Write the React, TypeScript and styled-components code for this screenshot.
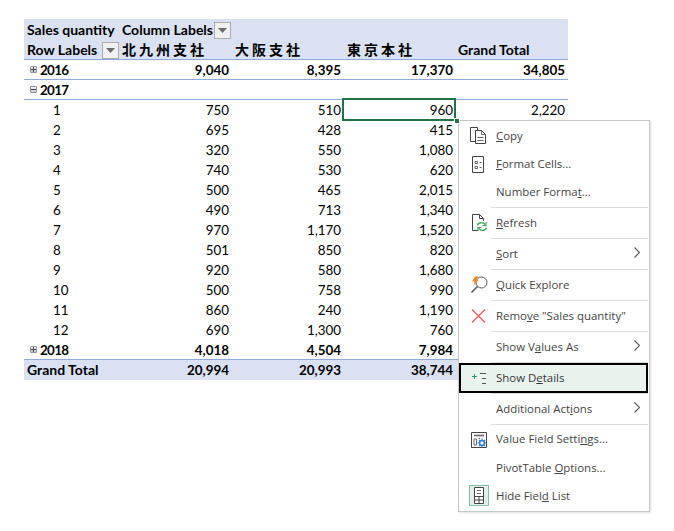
import React from "react";
import styled, { createGlobalStyle } from "styled-components";

const Global = createGlobalStyle`
  html, body { margin: 0; padding: 0; background: #fff; }
  body { width: 674px; height: 531px; overflow: hidden; }
`;

const Page = styled.div`
  position: relative;
  width: 674px;
  height: 531px;
  padding: 19px 0 0 24px;
  box-sizing: border-box;
`;

const Table = styled.div`
  display: flex;
  flex-direction: column;
  width: 544px;
  font-family: "Lato", "Liberation Sans", sans-serif;
  font-size: 13.4px;
  color: #000;
`;

const Row = styled.div<{ $band?: boolean; $bold?: boolean; $line?: boolean; $top?: boolean }>`
  display: grid;
  grid-template-columns: 94px 114px 112px 112px 112px;
  grid-template-rows: 20px;
  height: ${(p) => (p.$top ? 21 : 20)}px;
  padding-top: ${(p) => (p.$top ? 1 : 0)}px;
  box-sizing: border-box;
  background: ${(p) => (p.$band ? "#d9e1f2" : "#fff")};
  font-weight: ${(p) => (p.$bold ? 700 : 400)};
  border-bottom: ${(p) => (p.$line ? "1px solid #8ea9db" : "none")};
`;

const Cell = styled.div<{ $selected?: boolean }>`
  position: relative;
  display: flex;
  align-items: center;
  justify-content: flex-end;
  padding: 0 3px 0 0;
  height: 20px;
  box-sizing: border-box;
  line-height: 18px;
  white-space: nowrap;
  ${(p) =>
    p.$selected
      ? `&::before {
          content: "";
          position: absolute;
          left: -2px; top: -2px; width: 114px; height: 23px;
          box-sizing: border-box;
          border: 2px solid #217346;
        }
        &::after {
          content: "";
          position: absolute;
          left: 110px; top: 18px; width: 4px; height: 4px;
          background: #217346;
          border: 1px solid #fff;
          z-index: 1;
        }`
      : ""}
`;

const LabelCell = styled(Cell)<{ $indent?: number }>`
  justify-content: flex-start;
  padding-left: ${(p) => p.$indent ?? 3}px;
  padding-right: 0;
`;

const TextLabel = styled(LabelCell)`
  font-size: 14px;
`;

const YearCell = styled(LabelCell)`
  letter-spacing: -0.7px;
  padding-left: 6px;
`;

const WideCell = styled(TextLabel)`
  justify-content: space-between;
  padding-right: 0;
`;

const ColumnLabelCell = styled(WideCell)`
  padding-right: 2px;
`;

const CjkHead = styled(LabelCell)`
  font-family: "Noto Sans CJK JP", "Noto Sans CJK SC", sans-serif;
  font-size: 14px;
  font-weight: 700;
  letter-spacing: 3px;
  padding-bottom: 2px;
`;

const Expander = styled.span`
  display: inline-flex;
  align-items: center;
  justify-content: center;
  width: 5px;
  height: 5px;
  margin-right: 3px;
  margin-top: -2px;
  border: 1px solid #919191;
  border-radius: 1px;
  background: linear-gradient(#f6f6f6, #c9cedb);
`;

const DropButton = styled.span`
  display: inline-flex;
  align-items: center;
  justify-content: center;
  width: 15px;
  height: 15px;
  margin-right: -1px;
  border: 1px solid #ababab;
  background: #f0f0f0;
`;

const Menu = styled.div`
  position: absolute;
  left: 458px;
  top: 120px;
  width: 192px;
  height: 392px;
  padding: 1px 0 0;
  box-sizing: border-box;
  background: #fff;
  border: 1px solid #c6c6c6;
  box-shadow: 1px 1px 2px rgba(0, 0, 0, 0.12);
  font-family: "Open Sans", "Liberation Sans", sans-serif;
  font-size: 11.45px;
  color: #444;
`;

const Item = styled.div<{ $h?: number; $focus?: boolean }>`
  position: relative;
  display: flex;
  align-items: center;
  height: ${(p) => p.$h ?? 28}px;
  box-sizing: border-box;
  margin: ${(p) => (p.$focus ? "0 1px 0 0" : "0")};
  padding: 0 0 2px 37px;
  white-space: nowrap;
  ${(p) => (p.$focus ? "background: #e9f3ee; outline: 2px solid #000; outline-offset: -2px; color: #333;" : "")}
`;

const IconSlot = styled.span`
  position: absolute;
  left: 10px;
  top: 50%;
  width: 20px;
  height: 20px;
  margin-top: -10px;
  display: block;
`;

const ToggleSlot = styled(IconSlot)`
  width: 20px;
  height: 21px;
  margin-top: -11px;
  background: #e3f0e9;
  border: 1px solid #86bfa0;
  box-sizing: border-box;
`;

const Chevron = styled.svg`
  position: absolute;
  right: 9px;
  top: 50%;
  margin-top: -7px;
`;

const Sep = styled.div<{ $first?: boolean }>`
  height: 1px;
  margin: ${(p) => (p.$first ? "1px" : "0")} 1px 0 32px;
  background: #dcdcdc;
`;

const Ico = ({ children, w = 20, h = 20 }: { children: React.ReactNode; w?: number; h?: number }) => (
  <svg width={w} height={h} viewBox={`0 0 ${w} ${h}`} fill="none" style={{ display: "block" }}>
    {children}
  </svg>
);

const Tri = () => (
  <svg width="9" height="5" viewBox="0 0 9 5">
    <path d="M0 0H9L4.5 5Z" fill="#6b6b6b" />
  </svg>
);

const Exp = ({ open }: { open?: boolean }) => (
  <Expander>
    <svg width="5" height="5" viewBox="0 0 5 5">
      <path d="M0 2.5H5" stroke="#444" strokeWidth="1" />
      {!open && <path d="M2.5 0V5" stroke="#444" strokeWidth="1" />}
    </svg>
  </Expander>
);

const Arrow = () => (
  <Chevron width="6" height="11" viewBox="0 0 6 11" fill="none">
    <path d="M.5.5 5.5 5.5.5 10.5" stroke="#555" strokeWidth="1.1" />
  </Chevron>
);

const months: [string, string, string, string, string?][] = [
  ["1", "750", "510", "960", "2,220"],
  ["2", "695", "428", "415"],
  ["3", "320", "550", "1,080"],
  ["4", "740", "530", "620"],
  ["5", "500", "465", "2,015"],
  ["6", "490", "713", "1,340"],
  ["7", "970", "1,170", "1,520"],
  ["8", "501", "850", "820"],
  ["9", "920", "580", "1,680"],
  ["10", "500", "758", "990"],
  ["11", "860", "240", "1,190"],
  ["12", "690", "1,300", "760"],
];

export default function App() {
  return (
    <Page>
      <Global />
      <Table>
        <Row $band $bold $top>
          <TextLabel>Sales quantity</TextLabel>
          <ColumnLabelCell $indent={4}>
            Column Labels
            <DropButton><Tri /></DropButton>
          </ColumnLabelCell>
          <Cell /><Cell /><Cell />
        </Row>
        <Row $band $bold $line>
          <WideCell>
            Row Labels
            <DropButton><Tri /></DropButton>
          </WideCell>
          <CjkHead $indent={4}>北九州支社</CjkHead>
          <CjkHead $indent={3}>大阪支社</CjkHead>
          <CjkHead $indent={3}>東京本社</CjkHead>
          <TextLabel $indent={2}>Grand Total</TextLabel>
        </Row>
        <Row $bold $line>
          <YearCell><Exp />2016</YearCell>
          <Cell>9,040</Cell><Cell>8,395</Cell><Cell>17,370</Cell><Cell>34,805</Cell>
        </Row>
        <Row $bold $line>
          <YearCell><Exp open />2017</YearCell>
          <Cell /><Cell /><Cell /><Cell />
        </Row>
        {months.map(([m, a, b, c, t], i) => (
          <Row key={m}>
            <LabelCell $indent={29}>{m}</LabelCell>
            <Cell>{a}</Cell>
            <Cell>{b}</Cell>
            <Cell $selected={i === 0}>{c}</Cell>
            <Cell>{t}</Cell>
          </Row>
        ))}
        <Row $bold $line>
          <YearCell><Exp />2018</YearCell>
          <Cell>4,018</Cell><Cell>4,504</Cell><Cell>7,984</Cell><Cell />
        </Row>
        <Row $band $bold>
          <TextLabel>Grand Total</TextLabel>
          <Cell>20,994</Cell><Cell>20,993</Cell><Cell>38,744</Cell><Cell />
        </Row>
      </Table>

      <Menu>
        <Item>
          <IconSlot>
            <Ico>
              <path d="M6.5 15.5H1.5V1.5H8.5V4" stroke="#444" />
              <path d="M6.5 4.5H12.5L16.5 8.5V17.5H6.5Z" stroke="#444" />
              <path d="M12.5 4.5V8.5H16.5M8.5 11.5H14.5M8.5 14.5H14.5" stroke="#666" />
            </Ico>
          </IconSlot>
          <span><u>C</u>opy</span>
        </Item>
        <Item>
          <IconSlot>
            <Ico>
              <path d="M3.5 2.5H14.5V18.5H3.5Z" stroke="#444" />
              <path d="M6 7.5H8.5V9.5H6ZM6 12.5H8.5V14.5H6Z" stroke="#555" strokeWidth=".9" />
              <path d="M10.5 8.5H12.5M10.5 13.5H12.5" stroke="#555" />
            </Ico>
          </IconSlot>
          <span><u>F</u>ormat Cells...</span>
        </Item>
        <Item>
          <span>Number Forma<u>t</u>...</span>
        </Item>
        <Sep $first />
        <Item $h={30}>
          <IconSlot>
            <Ico>
              <path d="M9 17.5H3.5V1.5H10.5L14.5 5.5V8M10.5 1.5V5.5H14.5" stroke="#444" />
              <path d="M8.5 12.5C9 9.5 14 8.5 16 11.5M17.5 14.5C17 17.5 12 18.5 10 15.5" stroke="#3aa655" strokeWidth="1.4" />
              <path d="M17 9V12.5H13.5M9 18V14.5H12.5" stroke="#3aa655" strokeWidth="1.1" />
            </Ico>
          </IconSlot>
          <span><u>R</u>efresh</span>
        </Item>
        <Sep />
        <Item $h={30}>
          <span><u>S</u>ort</span>
          <Arrow />
        </Item>
        <Sep />
        <Item $h={30}>
          <IconSlot>
            <Ico>
              <circle cx="12.5" cy="7.5" r="5.5" stroke="#555" />
              <path d="M8.5 11.5 2.5 17.5" stroke="#555" strokeWidth="1.6" />
              <path d="M6 1.5H9.5L7.5 5H9.5L4.5 10.5L5.5 6.5H3Z" fill="#e8872c" />
            </Ico>
          </IconSlot>
          <span><u>Q</u>uick Explore</span>
        </Item>
        <Sep />
        <Item $h={30}>
          <IconSlot>
            <Ico>
              <path d="M3 3.5 16 16.5M16 3.5 3 16.5" stroke="#e8555a" strokeWidth="1.2" />
            </Ico>
          </IconSlot>
          <span>Remo<u>v</u>e "Sales quantity"</span>
        </Item>
        <Sep />
        <Item $h={30}>
          <span>Show V<u>a</u>lues As</span>
          <Arrow />
        </Item>
        <Sep />
        <Item $h={30} $focus>
          <IconSlot>
            <Ico>
              <path d="M3 8.5H8M5.5 6V11" stroke="#2e9a5b" />
              <path d="M11 5.5H17M13 10.5H17M13 15.5H17" stroke="#555" />
            </Ico>
          </IconSlot>
          <span>Show D<u>e</u>tails</span>
        </Item>
        <Sep />
        <Item $h={30}>
          <span>Additional Act<u>i</u>ons</span>
          <Arrow />
        </Item>
        <Sep />
        <Item $h={29}>
          <IconSlot>
            <Ico>
              <path d="M2.5 2.5H17.5V17.5H2.5" stroke="#444" />
              <path d="M2.5 2.5V17.5H8" stroke="#444" />
              <path d="M5 5.5H15" stroke="#666" strokeWidth="1.6" />
              <path d="M5 9H7.5V15H5ZM9.5 8.5H11" stroke="#666" />
              <circle cx="13" cy="13" r="2.4" stroke="#2b7cd3" strokeWidth="1.5" fill="#fff" />
              <path d="M13 8.5V10.5M13 15.5V17.5M8.5 13H10.5M15.5 13H17.5M10 10 11.2 11.2M14.8 14.8 16 16M16 10 14.8 11.2M11.2 14.8 10 16" stroke="#2b7cd3" strokeWidth="1.2" />
            </Ico>
          </IconSlot>
          <span>Value Field Setti<u>n</u>gs...</span>
        </Item>
        <Item>
          <span>PivotTable <u>O</u>ptions...</span>
        </Item>
        <Item>
          <ToggleSlot>
            <Ico w={18} h={19}>
              <path d="M4.5 1.5H13.5V17.5H4.5Z" stroke="#444" fill="#fff" />
              <path d="M4.5 10.5H13.5M4.5 14H13.5M9 10.5V17.5" stroke="#444" />
              <path d="M7 4.5H11M7 7.5H11" stroke="#666" />
            </Ico>
          </ToggleSlot>
          <span>Hide Fiel<u>d</u> List</span>
        </Item>
      </Menu>
    </Page>
  );
}
